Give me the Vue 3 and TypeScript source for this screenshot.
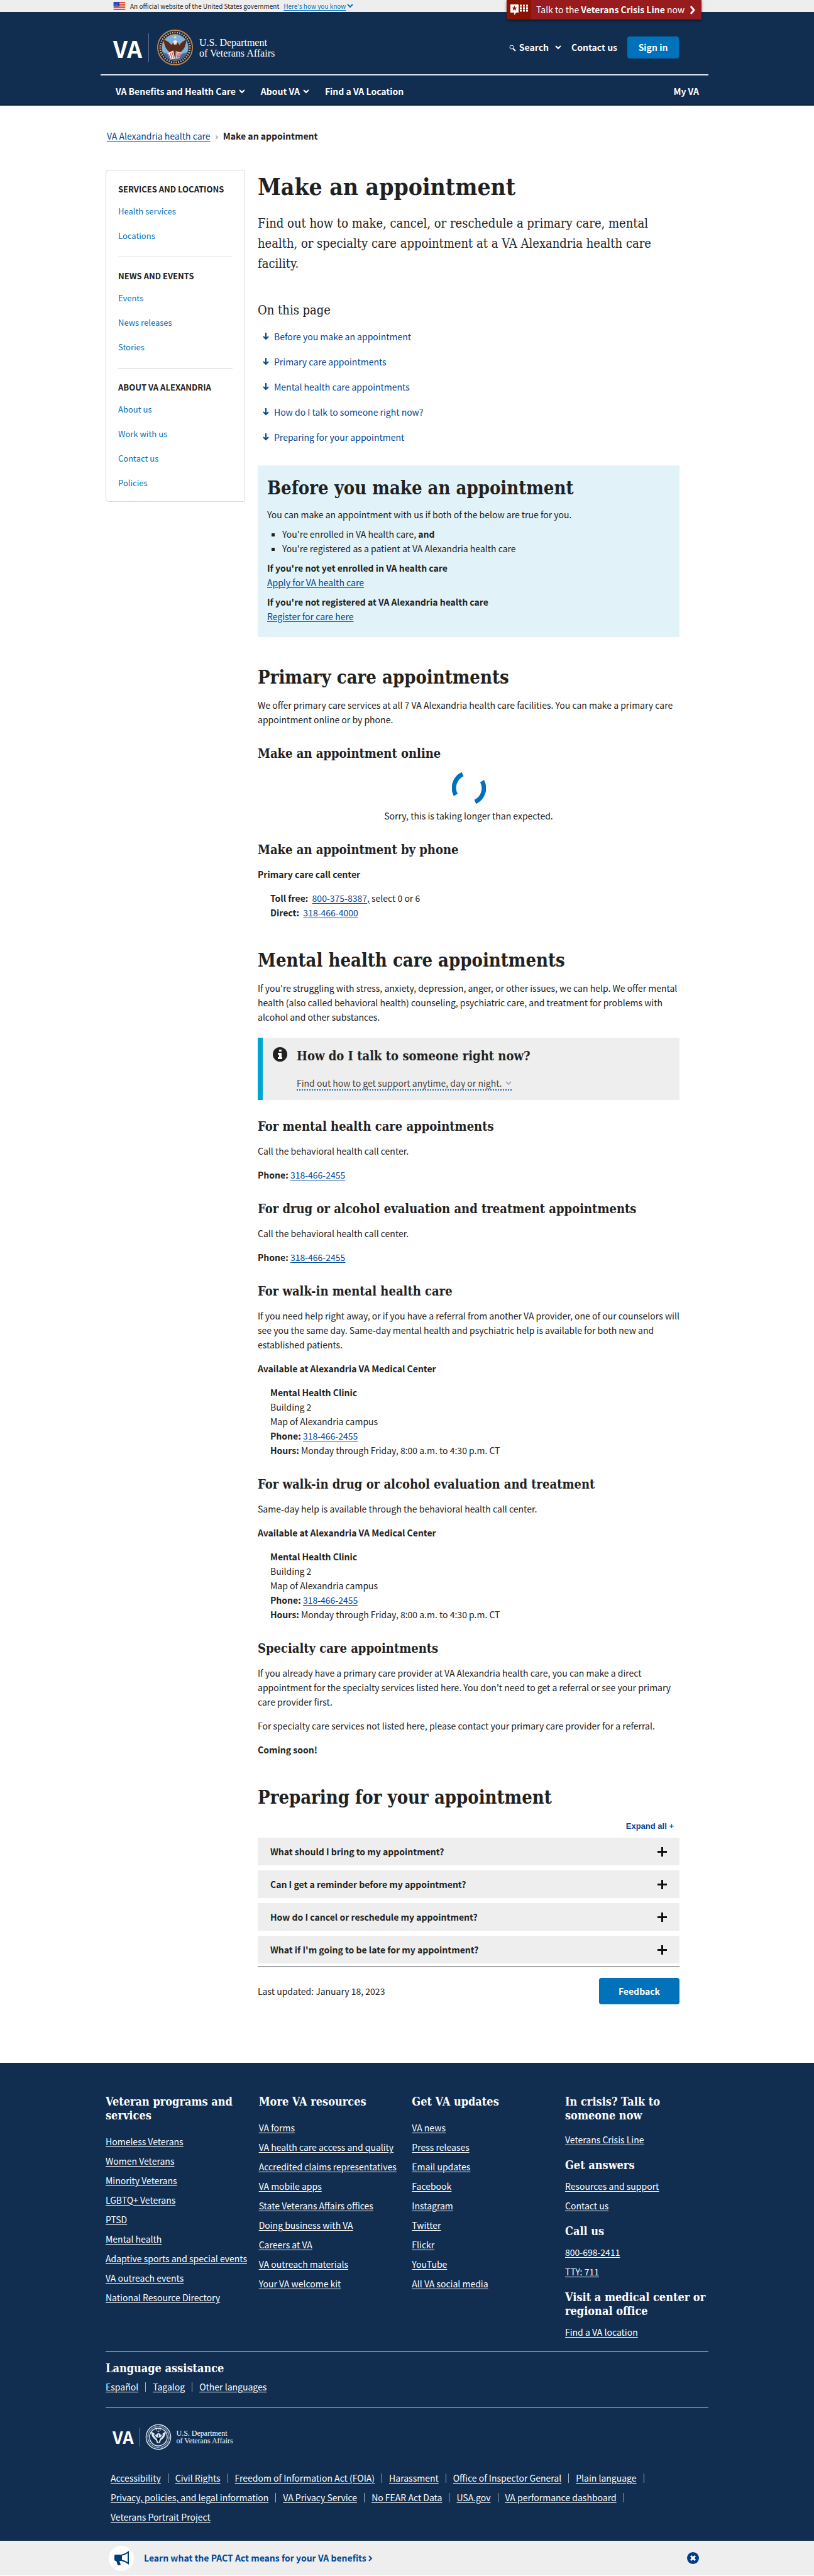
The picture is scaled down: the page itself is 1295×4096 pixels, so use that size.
<script setup lang="ts">
import { ref } from 'vue'

interface LinkGroup {
  title: string
  links: string[]
}

const sidebar: LinkGroup[] = [
  { title: 'Services and locations', links: ['Health services', 'Locations'] },
  { title: 'News and events', links: ['Events', 'News releases', 'Stories'] },
  { title: 'About VA Alexandria', links: ['About us', 'Work with us', 'Contact us', 'Policies'] },
]

const contents: string[] = [
  'Before you make an appointment',
  'Primary care appointments',
  'Mental health care appointments',
  'How do I talk to someone right now?',
  'Preparing for your appointment',
]

const questions = ref([
  { text: 'What should I bring to my appointment?', open: false },
  { text: 'Can I get a reminder before my appointment?', open: false },
  { text: 'How do I cancel or reschedule my appointment?', open: false },
  { text: "What if I'm going to be late for my appointment?", open: false },
])

function expandAll(): void {
  questions.value.forEach((q) => (q.open = true))
}

const footerColumns: LinkGroup[] = [
  {
    title: 'Veteran programs and\nservices',
    links: [
      'Homeless Veterans',
      'Women Veterans',
      'Minority Veterans',
      'LGBTQ+ Veterans',
      'PTSD',
      'Mental health',
      'Adaptive sports and special events',
      'VA outreach events',
      'National Resource Directory',
    ],
  },
  {
    title: 'More VA resources',
    links: [
      'VA forms',
      'VA health care access and quality',
      'Accredited claims representatives',
      'VA mobile apps',
      'State Veterans Affairs offices',
      'Doing business with VA',
      'Careers at VA',
      'VA outreach materials',
      'Your VA welcome kit',
    ],
  },
  {
    title: 'Get VA updates',
    links: [
      'VA news',
      'Press releases',
      'Email updates',
      'Facebook',
      'Instagram',
      'Twitter',
      'Flickr',
      'YouTube',
      'All VA social media',
    ],
  },
]

const contactGroups: LinkGroup[] = [
  { title: 'In crisis? Talk to\nsomeone now', links: ['Veterans Crisis Line'] },
  { title: 'Get answers', links: ['Resources and support', 'Contact us'] },
  { title: 'Call us', links: ['800-698-2411', 'TTY: 711'] },
  { title: 'Visit a medical center or\nregional office', links: ['Find a VA location'] },
]

const languages: string[] = ['Español', 'Tagalog', 'Other languages']

const legalLinks: string[] = [
  'Accessibility',
  'Civil Rights',
  'Freedom of Information Act (FOIA)',
  'Harassment',
  'Office of Inspector General',
  'Plain language',
  'Privacy, policies, and legal information',
  'VA Privacy Service',
  'No FEAR Act Data',
  'USA.gov',
  'VA performance dashboard',
  'Veterans Portrait Project',
]
</script>

<template>
  <div class="page">
    <div class="gov">
      <div class="wrap gov-row">
        <svg class="flag" viewBox="0 0 20 14" aria-hidden="true">
          <rect width="20" height="14" fill="#fff" />
          <path d="M0 1h20M0 4h20M0 7h20M0 10h20M0 13h20" stroke="#db3e1f" stroke-width="2" />
          <rect width="10" height="8" fill="#1e33b1" />
          <path d="M1 2h8M1 4h8M1 6h8" stroke="#a5adf0" stroke-width="1" stroke-dasharray="1 1" />
        </svg>
        <span>An official website of the United States government</span>
        <button type="button" class="gov-how">
          <span>Here's how you know</span>
          <svg width="10" height="7" viewBox="0 0 10 7" aria-hidden="true">
            <path d="M1 1l4 4 4-4" fill="none" stroke="#0071bb" stroke-width="2" />
          </svg>
        </button>
        <a href="#" class="crisis">
          <span class="crisis-icon">
            <svg width="28" height="19" viewBox="0 0 28 19" aria-hidden="true">
              <path d="M0 1h13v13H9l-3 4v-4H0z" fill="#fff" />
              <path d="M6.500 3l1.300 3h3l-2.400 2 1 3-2.900-2-2.900 2 1-3-2.400-2h3z" fill="#8b1303" />
              <path d="M15 3h13M15 7h13M15 11h13" stroke="#fff" stroke-width="3" stroke-dasharray="3 2" />
            </svg>
          </span>
          <span class="crisis-text">Talk to the <b>Veterans Crisis Line</b> now</span>
          <svg width="9" height="14" viewBox="0 0 9 14" aria-hidden="true">
            <path d="M2 1l5 6-5 6" fill="none" stroke="#fff" stroke-width="3" />
          </svg>
        </a>
      </div>
    </div>

    <header class="top">
      <div class="wrap brand-row">
        <a href="#" class="brand" aria-label="VA, U.S. Department of Veterans Affairs">
          <span class="va">VA</span>
          <svg class="seal" viewBox="0 0 60 60" aria-hidden="true">
            <circle cx="30" cy="30" r="29" fill="#0c1c38" stroke="#b8865a" stroke-width="2" />
            <circle cx="30" cy="30" r="25" fill="none" stroke="#c9b28f" stroke-width="3" stroke-dasharray="2 2" />
            <circle cx="30" cy="30" r="22" fill="#7fb2dd" stroke="#c08a4a" stroke-width="1" />
            <path d="M10 38q20 8 40 0-4 14-20 14T10 38z" fill="#3f6a9a" />
            <path d="M11 17q8 2 13 9 3-5 6-6 5 0 7 6 5-7 12-9-1 14-9 20l-4 9H24l-4-9q-8-6-9-20z" fill="#5b2b1a" />
            <path d="M27 20q3-4 7 0l-2 5h-4z" fill="#f2efe8" />
            <path d="M31 23l3 1-3 2z" fill="#e9a63a" />
            <path d="M17 40l10-5 3 14-8 1z" fill="#f1e8e4" />
            <path d="M19 41l3 8M22 39l3 10M25 38l3 10" stroke="#b52b35" stroke-width="1" />
            <path d="M31 36l11 3-5 9-6 1z" fill="#d8c9c9" />
            <path d="M33 38l1 9M37 39l-1 8M40 40l-3 6" stroke="#b52b35" stroke-width="1" />
            <circle cx="30" cy="13" r="2" fill="#f1dca4" />
          </svg>
          <span class="dept">U.S. Department<br />of Veterans Affairs</span>
        </a>
        <div class="tools">
          <button type="button" class="tool search">
            <svg width="12" height="12" viewBox="0 0 12 12" aria-hidden="true">
              <circle cx="5" cy="5" r="3" fill="none" stroke="#fff" stroke-width="1" />
              <path d="M7 7l4 4" stroke="#fff" stroke-width="2" />
            </svg>
            <span>Search</span>
            <svg class="chev" width="10" height="7" viewBox="0 0 10 7" aria-hidden="true">
              <path d="M1 1l4 4 4-4" fill="none" stroke="#fff" stroke-width="2" />
            </svg>
          </button>
          <a href="#" class="tool">Contact us</a>
          <button type="button" class="signin">Sign in</button>
        </div>
      </div>
      <div class="wrap">
        <nav class="nav" aria-label="Main">
          <button type="button" class="tool">
            VA Benefits and Health Care
            <svg width="10" height="7" viewBox="0 0 10 7" aria-hidden="true">
              <path d="M1 1l4 4 4-4" fill="none" stroke="#fff" stroke-width="2" />
            </svg>
          </button>
          <button type="button" class="tool">
            About VA
            <svg width="10" height="7" viewBox="0 0 10 7" aria-hidden="true">
              <path d="M1 1l4 4 4-4" fill="none" stroke="#fff" stroke-width="2" />
            </svg>
          </button>
          <a href="#" class="tool">Find a VA Location</a>
          <a href="#" class="tool my-va">My VA</a>
        </nav>
      </div>
    </header>

    <nav class="wrap crumbs" aria-label="Breadcrumb">
      <a href="#">VA Alexandria health care</a>
      <span class="sep">›</span>
      <b>Make an appointment</b>
    </nav>

    <div class="wrap columns">
      <nav class="side" aria-label="Section">
        <section v-for="group in sidebar" :key="group.title">
          <h2>{{ group.title }}</h2>
          <ul>
            <li v-for="item in group.links" :key="item"><a href="#">{{ item }}</a></li>
          </ul>
        </section>
      </nav>

      <main class="content">
        <h1>Make an appointment</h1>
        <p class="intro">
          Find out how to make, cancel, or reschedule a primary care, mental health, or specialty
          care appointment at a VA Alexandria health care facility.
        </p>

        <nav class="toc" aria-label="On this page">
          <h2>On this page</h2>
          <ul>
            <li v-for="item in contents" :key="item">
              <a href="#">
                <svg width="10" height="12" viewBox="0 0 10 12" aria-hidden="true">
                  <path d="M5 0v10M1 6l4 4 4-4" fill="none" stroke="#004795" stroke-width="2" />
                </svg>
                {{ item }}
              </a>
            </li>
          </ul>
        </nav>

        <section class="feature">
          <h2>Before you make an appointment</h2>
          <p>You can make an appointment with us if both of the below are true for you.</p>
          <ul>
            <li>You're enrolled in VA health care, <b>and</b></li>
            <li>You're registered as a patient at VA Alexandria health care</li>
          </ul>
          <p><b>If you're not yet enrolled in VA health care</b><br /><a href="#">Apply for VA health care</a></p>
          <p><b>If you're not registered at VA Alexandria health care</b><br /><a href="#">Register for care here</a></p>
        </section>

        <h2>Primary care appointments</h2>
        <p>
          We offer primary care services at all 7 VA Alexandria health care facilities. You can make
          a primary care appointment online or by phone.
        </p>
        <h3>Make an appointment online</h3>
        <div class="loading" role="status">
          <svg width="54" height="54" viewBox="0 0 54 54" aria-hidden="true">
            <g fill="none" stroke="#0071bb" stroke-width="7">
              <path d="M17 5A24 24 0 0 0 6 38" />
              <path d="M48 16A24 24 0 0 1 37 49" />
            </g>
          </svg>
          <p>Sorry, this is taking longer than expected.</p>
        </div>
        <h3>Make an appointment by phone</h3>
        <p><b>Primary care call center</b></p>
        <p class="indent">
          <b>Toll free:</b>&nbsp; <a href="#">800-375-8387,</a> select 0 or 6<br />
          <b>Direct:</b>&nbsp; <a href="#">318-466-4000</a>
        </p>

        <h2>Mental health care appointments</h2>
        <p>
          If you're struggling with stress, anxiety, depression, anger, or other issues, we can
          help. We offer mental health (also called behavioral health) counseling, psychiatric care,
          and treatment for problems with alcohol and other substances.
        </p>
        <section class="alert">
          <svg width="23" height="23" viewBox="0 0 23 23" aria-hidden="true">
            <circle cx="11.500" cy="11.500" r="11.500" fill="#212121" />
            <path d="M10 4h4v3h-4zM8 9h6v7h1v3H8v-3h2v-4H8z" fill="#fff" />
          </svg>
          <div>
            <h3>How do I talk to someone right now?</h3>
            <button type="button" class="more">
              Find out how to get support anytime, day or night.
              <svg width="10" height="7" viewBox="0 0 10 7" aria-hidden="true">
                <path d="M1 1l4 4 4-4" fill="none" stroke="#aeb0b5" stroke-width="2" />
              </svg>
            </button>
          </div>
        </section>

        <h3>For mental health care appointments</h3>
        <p>Call the behavioral health call center.</p>
        <p><b>Phone:</b> <a href="#">318-466-2455</a></p>

        <h3>For drug or alcohol evaluation and treatment appointments</h3>
        <p>Call the behavioral health call center.</p>
        <p><b>Phone:</b> <a href="#">318-466-2455</a></p>

        <h3>For walk-in mental health care</h3>
        <p>
          If you need help right away, or if you have a referral from another VA provider, one of
          our counselors will see you the same day. Same-day mental health and psychiatric help is
          available for both new and established patients.
        </p>
        <p><b>Available at Alexandria VA Medical Center</b></p>
        <p class="indent">
          <b>Mental Health Clinic</b><br />
          Building 2<br />
          Map of Alexandria campus<br />
          <b>Phone:</b> <a href="#">318-466-2455</a><br />
          <b>Hours:</b> Monday through Friday, 8:00 a.m. to 4:30 p.m. CT
        </p>

        <h3>For walk-in drug or alcohol evaluation and treatment</h3>
        <p>Same-day help is available through the behavioral health call center.</p>
        <p><b>Available at Alexandria VA Medical Center</b></p>
        <p class="indent">
          <b>Mental Health Clinic</b><br />
          Building 2<br />
          Map of Alexandria campus<br />
          <b>Phone:</b> <a href="#">318-466-2455</a><br />
          <b>Hours:</b> Monday through Friday, 8:00 a.m. to 4:30 p.m. CT
        </p>

        <h3>Specialty care appointments</h3>
        <p>
          If you already have a primary care provider at VA Alexandria health care, you can make a
          direct appointment for the specialty services listed here. You don't need to get a
          referral or see your primary care provider first.
        </p>
        <p>For specialty care services not listed here, please contact your primary care provider for a referral.</p>
        <p><b>Coming soon!</b></p>

        <h2>Preparing for your appointment</h2>
        <div class="expand-row">
          <button type="button" class="expand" @click="expandAll">Expand all +</button>
        </div>
        <div class="accordion">
          <button
            v-for="q in questions"
            :key="q.text"
            type="button"
            :aria-expanded="q.open"
            @click="q.open = !q.open"
          >
            <span>{{ q.text }}</span>
            <svg width="15" height="15" viewBox="0 0 15 15" aria-hidden="true">
              <path d="M0 7.500h15M7.500 0v15" stroke="#111" stroke-width="3" />
            </svg>
          </button>
        </div>
        <div class="updated">
          <span>Last updated: January 18, 2023</span>
          <button type="button">Feedback</button>
        </div>
      </main>
    </div>

    <footer class="foot">
      <div class="wrap">
        <div class="foot-cols">
          <section v-for="col in footerColumns" :key="col.title">
            <h2>{{ col.title }}</h2>
            <ul>
              <li v-for="item in col.links" :key="item"><a href="#">{{ item }}</a></li>
            </ul>
          </section>
          <div class="contact">
            <section v-for="group in contactGroups" :key="group.title">
              <h2>{{ group.title }}</h2>
              <ul>
                <li v-for="item in group.links" :key="item"><a href="#">{{ item }}</a></li>
              </ul>
            </section>
          </div>
        </div>

        <section class="language">
          <h2>Language assistance</h2>
          <ul class="piped">
            <li v-for="item in languages" :key="item"><a href="#">{{ item }}</a></li>
          </ul>
        </section>

        <a href="#" class="brand small" aria-label="VA, U.S. Department of Veterans Affairs">
          <span class="va">VA</span>
          <svg class="seal" viewBox="0 0 60 60" aria-hidden="true">
            <g fill="none" stroke="#e4ecf5">
              <circle cx="30" cy="30" r="28" stroke-width="2" />
              <circle cx="30" cy="30" r="24" stroke-width="3" stroke-dasharray="2 1" opacity="0.700" />
              <circle cx="30" cy="30" r="20" stroke-width="2" />
            </g>
            <path d="M13 17q7 3 11 9 3-5 6-5t6 5q5-6 11-9-1 13-9 18l-3 9h-10l-3-9q-8-5-9-18z" fill="#dfe8f2" />
            <path d="M20 24l5 8M40 24l-5 8M26 31l4 10 4-10M30 24v6M23 37l4 8M37 37l-4 8" stroke="#112e51" stroke-width="2" />
            <path d="M25 14h2M29 12h2M33 14h2M28 17h4" stroke="#fff" stroke-width="2" />
          </svg>
          <span class="dept">U.S. Department<br />of Veterans Affairs</span>
        </a>

        <ul class="piped legal">
          <li v-for="item in legalLinks" :key="item"><a href="#">{{ item }}</a></li>
        </ul>
      </div>
    </footer>

    <aside class="promo">
      <div class="wrap promo-row">
        <span class="horn">
          <svg width="25" height="24" viewBox="0 0 25 24" aria-hidden="true">
            <path d="M1 8q0-2 2-2h9v10H9l2 6q-3 2-5 0L4 16H3q-2 0-2-2z" fill="#003e73" />
            <path d="M12 7q6-1 11-5v18q-5-4-11-5z" fill="none" stroke="#003e73" stroke-width="2" />
            <path d="M23 9q2 2 0 4z" fill="#003e73" />
          </svg>
        </span>
        <a href="#">
          Learn what the PACT Act means for your VA benefits
          <svg width="7" height="10" viewBox="0 0 7 10" aria-hidden="true">
            <path d="M1 1l4 4-4 4" fill="none" stroke="#004795" stroke-width="2" />
          </svg>
        </a>
        <button type="button" aria-label="Close">
          <svg width="19" height="19" viewBox="0 0 19 19" aria-hidden="true">
            <circle cx="9.500" cy="9.500" r="9.500" fill="#003e8a" />
            <path d="M6 6l7 7M13 6l-7 7" stroke="#fff" stroke-width="3" />
          </svg>
        </button>
      </div>
    </aside>
  </div>
</template>

<style>
body {
  margin: 0;
  background: #fff;
}
</style>

<style scoped>
.page {
  --sans: 'Noto Sans CJK SC', 'Noto Sans', sans-serif;
  --slab: 'DejaVu Serif Condensed', 'DejaVu Serif', serif;
  --navy: #112e51;
  font: 14px/23px var(--sans);
  color: #212121;
}

.page * {
  box-sizing: border-box;
}

.wrap {
  max-width: 959px;
  margin: 0 auto;
}

h1,
h2,
h3,
p,
ul {
  margin: 0;
  padding: 0;
}

ul {
  list-style: none;
}

button {
  border: 0;
  padding: 0;
  background: none;
  font: inherit;
  color: inherit;
  cursor: pointer;
}

a {
  color: #004795;
  text-underline-offset: 2px;
}

/* Government banner */
.gov {
  height: 19px;
  background: #eee;
  font-size: 10px;
  line-height: 19px;
}

.gov-row {
  display: flex;
  align-items: center;
  gap: 7px;
  padding: 0 12px;
  position: relative;
}

.flag {
  width: 20px;
  height: 13px;
}

.gov-how {
  display: flex;
  align-items: center;
  gap: 2px;
  color: #0071bb;
}

.gov-how span {
  text-decoration: underline;
  text-underline-offset: 2px;
}

.crisis {
  position: absolute;
  top: 0;
  right: 11px;
  display: flex;
  align-items: center;
  width: 310px;
  height: 31px;
  padding-right: 10px;
  background: #981b1e;
  box-shadow: 0 2px 4px rgba(0, 0, 0, 0.5);
  color: #fff;
  font-size: 14px;
  text-decoration: none;
}

.crisis-icon {
  display: flex;
  align-items: center;
  justify-content: center;
  width: 39px;
  height: 31px;
  background: #8b1303;
}

.crisis-text {
  flex: 1;
  padding-left: 8px;
  white-space: nowrap;
}

/* Header */
.top {
  background: var(--navy);
  border-bottom: 2px solid #0b2142;
  color: #fff;
}

.brand-row {
  display: flex;
  align-items: center;
  justify-content: space-between;
  height: 99px;
  padding: 14px 47px 0 12px;
}

.brand {
  display: flex;
  align-items: center;
  color: #fff;
  text-decoration: none;
}

.va {
  padding-right: 10px;
  border-right: 1px solid #5a7090;
  font-weight: 700;
  font-size: 37px;
  line-height: 46px;
}

.seal {
  width: 57px;
  height: 57px;
  margin: 0 10px 0 13px;
}

.dept {
  font: 16px/17px 'Liberation Serif', serif;
}

.tools {
  display: flex;
  align-items: center;
  gap: 16px;
}

.tool {
  display: flex;
  align-items: center;
  gap: 5px;
  color: #fff;
  font-weight: 700;
  text-decoration: none;
}

.search .chev {
  margin-left: 5px;
}

.signin {
  width: 82px;
  height: 35px;
  border-radius: 4px;
  background: #0071bb;
  font-weight: 700;
}

.nav {
  display: flex;
  align-items: center;
  gap: 25px;
  height: 48px;
  margin-left: -8px;
  padding: 5px 15px 0 24px;
  border-top: 2px solid #dce4ef;
}

.my-va {
  margin-left: auto;
}

/* Breadcrumb */
.crumbs {
  display: flex;
  gap: 8px;
  padding: 37px 2px 42px;
}

.sep {
  color: #5b616b;
}

/* Two columns */
.columns {
  display: flex;
  align-items: flex-start;
  gap: 20px;
}

.side {
  flex: 0 0 222px;
  padding: 18px 19px 10px;
  border: 1px solid #d6d7d9;
  border-radius: 4px;
  font-size: 13px;
}

.side section + section {
  margin-top: 14px;
  padding-top: 18px;
  border-top: 1px solid #d6d7d9;
}

.side h2 {
  margin-bottom: 4px;
  font-size: 13px;
  line-height: 23px;
  text-transform: uppercase;
}

.side li {
  line-height: 39px;
}

.side a {
  color: #0071bb;
  text-decoration: none;
}

.content {
  flex: 0 1 671px;
  min-width: 0;
  padding-top: 5px;
}

.content h1,
.content h2,
.content h3,
.content .intro,
.foot h2 {
  font-family: var(--slab);
}

h1 {
  margin-bottom: 20px;
  font-size: 37px;
  line-height: 44px;
}

.content h2 {
  margin: 46px 0 15px;
  font-size: 29px;
  line-height: 36px;
}

.content h3 {
  margin: 30px 0 15px;
  font-size: 20px;
  line-height: 25px;
}

.content p + p {
  margin-top: 15px;
}

.content .intro {
  font-size: 20px;
  line-height: 32px;
}

.content .toc h2 {
  margin: 42px 0 6px;
  font-weight: 400;
  font-size: 20px;
  line-height: 32px;
}

.toc a {
  display: flex;
  align-items: center;
  gap: 8px;
  padding-left: 8px;
  line-height: 40px;
  text-decoration: none;
}

.feature {
  margin-top: 25px;
  padding: 18px 15px 21px;
  background: #e1f3f8;
}

.content .feature h2 {
  margin: 0 0 13px;
}

.content .feature p + p {
  margin-top: 8px;
}

.feature ul {
  margin: 8px 0;
  padding-left: 24px;
  list-style: square;
}

.loading {
  text-align: center;
}

.loading svg {
  display: block;
  margin: 0 auto 6px;
}

.content .indent {
  padding-left: 20px;
}

.alert {
  display: flex;
  gap: 15px;
  margin-top: 21px;
  padding: 15px 16px 15px;
  border-left: 8px solid #00a6d2;
  background: #eee;
}

.content .alert h3 {
  margin: 2px 0 20px;
}

.more {
  display: flex;
  align-items: center;
  gap: 6px;
  border-bottom: 2px dotted #0071bb;
  color: #494440;
  line-height: 20px;
}

.expand-row {
  text-align: right;
}

.expand {
  padding-right: 9px;
  color: #004795;
  font: 700 13px/20px 'Liberation Sans', sans-serif;
}

.accordion {
  display: grid;
  gap: 8px;
  padding: 8px 0 4px;
  border-bottom: 2px solid #a6a7aa;
}

.accordion button {
  display: flex;
  align-items: center;
  justify-content: space-between;
  height: 44px;
  padding: 0 20px;
  background: #eee;
  font-weight: 700;
}

.updated {
  display: flex;
  align-items: center;
  justify-content: space-between;
  margin: 17px 0 93px;
}

.updated button {
  width: 128px;
  height: 42px;
  border-radius: 4px;
  background: #0071bb;
  color: #fff;
  font-weight: 700;
}

/* Footer */
.foot {
  padding: 51px 0 22px;
  background: var(--navy);
  color: #fff;
}

.foot a {
  color: #fff;
}

.foot h2 {
  font-size: 18px;
  line-height: 22px;
  white-space: pre-line;
}

.foot-cols {
  display: grid;
  grid-template-columns: repeat(3, 1fr) 228px;
  padding-bottom: 14px;
}

.foot-cols h2 {
  margin-bottom: 15px;
}

.foot-cols li,
.legal li {
  line-height: 31px;
}

.foot-cols .contact h2 {
  margin-bottom: 7px;
}

.contact section + section {
  margin-top: 14px;
}

.foot-cols .contact section:first-child h2 {
  margin-bottom: 12px;
}

.language {
  padding: 16px 0 20px;
  border: solid #dce4ef;
  border-width: 1px 0;
}

.language h2 {
  margin-bottom: 7px;
}

.piped {
  display: flex;
  flex-wrap: wrap;
}

.piped li {
  display: flex;
  align-items: center;
}

.piped li:not(:last-child)::after {
  content: '';
  width: 1px;
  height: 15px;
  margin: 0 11px;
  background: #a3b4c9;
}

.small {
  margin: 26px 0 29px;
  padding-left: 11px;
}

.small .va {
  padding-right: 8px;
  font-size: 27px;
  line-height: 30px;
}

.small .seal {
  width: 42px;
  height: 42px;
  margin: 0 8px 0 9px;
}

.small .dept {
  font-size: 12px;
  line-height: 12px;
}

.legal {
  padding-left: 8px;
}

/* Promo banner */
.promo {
  background: #eee;
}

.promo-row {
  display: flex;
  align-items: center;
  height: 55px;
  padding: 0 15px 0 5px;
}

.horn {
  display: flex;
  align-items: center;
  justify-content: center;
  width: 40px;
  height: 40px;
  margin-right: 16px;
  border-radius: 50%;
  background: #fff;
}

.promo a {
  flex: 1;
  font-weight: 700;
  text-decoration: none;
}

.promo button {
  display: flex;
}
</style>
